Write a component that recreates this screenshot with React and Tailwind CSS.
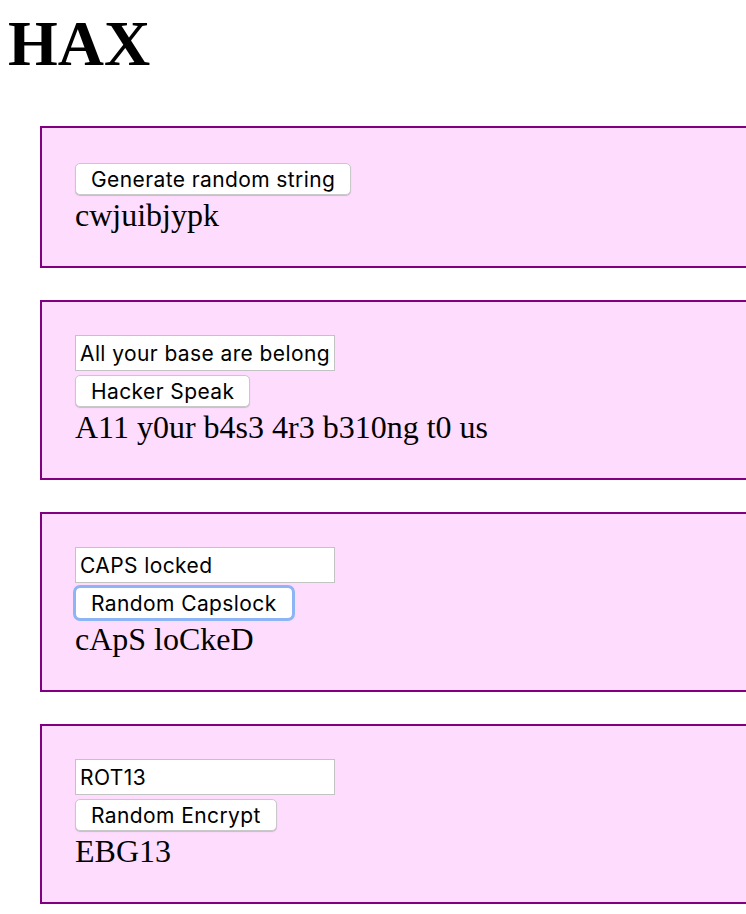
import React from "react";

const sans = "font-['Inter','Liberation_Sans',sans-serif]";

function Btn({ children, focused }) {
  return (
    <button
      type="button"
      className={
        "h-[32px] rounded-[5px] border border-[#c9c9c9] bg-white px-[15px] text-[21px] tracking-[0.4px] leading-none text-black shadow-[0_1px_1px_rgba(0,0,0,0.18)] " +
        sans +
        (focused ? " outline-[3px] outline-solid outline-[#8db5f6] -outline-offset-1" : "")
      }
    >
      {children}
    </button>
  );
}

function Field({ value }) {
  return (
    <input
      readOnly
      value={value}
      className={
        "h-[36px] w-[260px] border border-[#c3c3c3] bg-white px-[4px] text-[21px] tracking-[0.4px] text-black outline-none " +
        sans
      }
    />
  );
}

function Box({ first, children }) {
  return (
    <div
      className={
        "ml-10 flex w-[760px] flex-col items-start border-2 border-[#800080] bg-[#fddcfe] pl-[33px] pb-[30px] " +
        (first ? "pt-[35px]" : "pt-[33px]")
      }
    >
      {children}
    </div>
  );
}

function Out({ children }) {
  return <div className="text-[32px] leading-[41px] text-black">{children}</div>;
}

export default function App() {
  return (
    <div className="min-h-[914px] w-[746px] overflow-hidden bg-white font-['Liberation_Serif',serif]">
      <h1 className="ml-2 pt-[7px] text-[64px] font-bold leading-[74px] text-black">HAX</h1>
      <div className="mt-[45px] flex flex-col gap-8">
        <Box first>
          <Btn>Generate random string</Btn>
          <Out>cwjuibjypk</Out>
        </Box>
        <Box>
          <Field value="All your base are belong to us" />
          <div className="mt-1">
            <Btn>Hacker Speak</Btn>
          </div>
          <Out>A11 y0ur b4s3 4r3 b310ng t0 us</Out>
        </Box>
        <Box>
          <Field value="CAPS locked" />
          <div className="mt-1">
            <Btn focused>Random Capslock</Btn>
          </div>
          <Out>cApS loCkeD</Out>
        </Box>
        <Box>
          <Field value="ROT13" />
          <div className="mt-1">
            <Btn>Random Encrypt</Btn>
          </div>
          <Out>EBG13</Out>
        </Box>
      </div>
    </div>
  );
}
